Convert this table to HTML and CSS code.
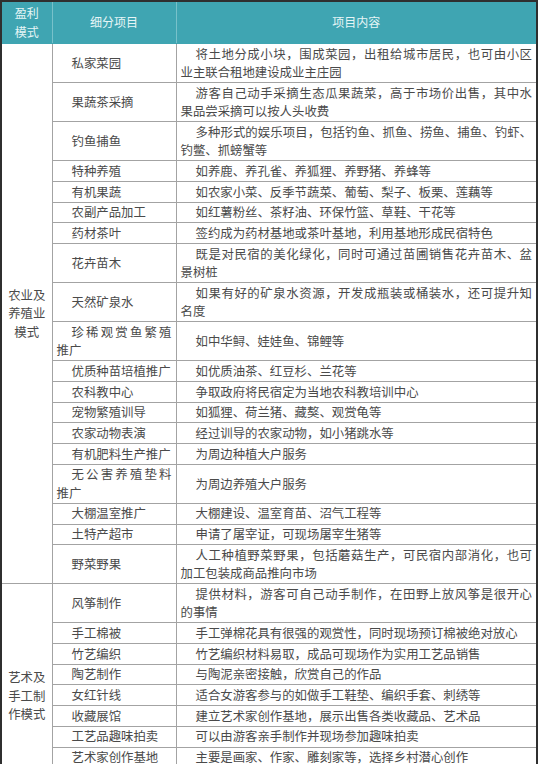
FILE: index.html
```html
<!DOCTYPE html>
<html lang="zh-CN">
<head>
<meta charset="utf-8">
<title>盈利模式</title>
<link rel="stylesheet" href="styles.css">
</head>
<body>
<table class="sheet">
  <colgroup><col class="w1"><col class="w2"><col class="w3"></colgroup>
  <thead>
    <tr class="head">
      <th class="c1">盈利<br>模式</th>
      <th class="c2">细分项目</th>
      <th class="c3">项目内容</th>
    </tr>
  </thead>
  <tbody>
    <tr>
      <td class="c1 mode" rowspan="19">农业及<br>养殖业<br>模式</td>
      <td class="c2 in">私家菜园</td>
      <td class="c3"><div class="l1">将土地分成小块，围成菜园，出租给城市居民，也可由小区</div><div>业主联合租地建设成业主庄园</div></td>
    </tr>
    <tr>
      <td class="c2 in">果蔬茶采摘</td>
      <td class="c3"><div class="l1">游客自己动手采摘生态瓜果蔬菜，高于市场价出售，其中水</div><div>果品尝采摘可以按人头收费</div></td>
    </tr>
    <tr>
      <td class="c2 in">钓鱼捕鱼</td>
      <td class="c3"><div class="l1">多种形式的娱乐项目，包括钓鱼、抓鱼、捞鱼、捕鱼、钓虾、</div><div>钓鳖、抓螃蟹等</div></td>
    </tr>
    <tr><td class="c2 in">特种养殖</td><td class="c3 in">如养鹿、养孔雀、养狐狸、养野猪、养蜂等</td></tr>
    <tr><td class="c2 in">有机果蔬</td><td class="c3 in">如农家小菜、反季节蔬菜、葡萄、梨子、板栗、莲藕等</td></tr>
    <tr><td class="c2 in">农副产品加工</td><td class="c3 in">如红薯粉丝、茶籽油、环保竹篮、草鞋、干花等</td></tr>
    <tr><td class="c2 in">药材茶叶</td><td class="c3 in">签约成为药材基地或茶叶基地，利用基地形成民宿特色</td></tr>
    <tr>
      <td class="c2 in">花卉苗木</td>
      <td class="c3"><div class="l1">既是对民宿的美化绿化，同时可通过苗圃销售花卉苗木、盆</div><div>景树桩</div></td>
    </tr>
    <tr>
      <td class="c2 in">天然矿泉水</td>
      <td class="c3"><div class="l1">如果有好的矿泉水资源，开发成瓶装或桶装水，还可提升知</div><div>名度</div></td>
    </tr>
    <tr>
      <td class="c2"><div class="l1">珍稀观赏鱼繁殖</div><div>推广</div></td>
      <td class="c3 in">如中华鲟、娃娃鱼、锦鲤等</td>
    </tr>
    <tr><td class="c2 in">优质种苗培植推广</td><td class="c3 in">如优质油茶、红豆杉、兰花等</td></tr>
    <tr><td class="c2 in">农科教中心</td><td class="c3 in">争取政府将民宿定为当地农科教培训中心</td></tr>
    <tr><td class="c2 in">宠物繁殖训导</td><td class="c3 in">如狐狸、荷兰猪、藏獒、观赏龟等</td></tr>
    <tr><td class="c2 in">农家动物表演</td><td class="c3 in">经过训导的农家动物，如小猪跳水等</td></tr>
    <tr><td class="c2 in">有机肥料生产推广</td><td class="c3 in">为周边种植大户服务</td></tr>
    <tr>
      <td class="c2"><div class="l1">无公害养殖垫料</div><div>推广</div></td>
      <td class="c3 in">为周边养殖大户服务</td>
    </tr>
    <tr><td class="c2 in">大棚温室推广</td><td class="c3 in">大棚建设、温室育苗、沼气工程等</td></tr>
    <tr><td class="c2 in">土特产超市</td><td class="c3 in">申请了屠宰证，可现场屠宰生猪等</td></tr>
    <tr>
      <td class="c2 in">野菜野果</td>
      <td class="c3"><div class="l1">人工种植野菜野果，包括蘑菇生产，可民宿内部消化，也可</div><div>加工包装成商品推向市场</div></td>
    </tr>
    <tr>
      <td class="c1 mode mode-art" rowspan="8">艺术及<br>手工制<br>作模式</td>
      <td class="c2 in">风筝制作</td>
      <td class="c3"><div class="l1">提供材料，游客可自己动手制作，在田野上放风筝是很开心</div><div>的事情</div></td>
    </tr>
    <tr><td class="c2 in">手工棉被</td><td class="c3 in">手工弹棉花具有很强的观赏性，同时现场预订棉被绝对放心</td></tr>
    <tr><td class="c2 in">竹艺编织</td><td class="c3 in">竹艺编织材料易取，成品可现场作为实用工艺品销售</td></tr>
    <tr><td class="c2 in">陶艺制作</td><td class="c3 in">与陶泥亲密接触，欣赏自己的作品</td></tr>
    <tr><td class="c2 in">女红针线</td><td class="c3 in">适合女游客参与的如做手工鞋垫、编织手套、刺绣等</td></tr>
    <tr><td class="c2 in">收藏展馆</td><td class="c3 in">建立艺术家创作基地，展示出售各类收藏品、艺术品</td></tr>
    <tr><td class="c2 in">工艺品趣味拍卖</td><td class="c3 in">可以由游客亲手制作并现场参加趣味拍卖</td></tr>
    <tr><td class="c2 in">艺术家创作基地</td><td class="c3 in">主要是画家、作家、雕刻家等，选择乡村潜心创作</td></tr>
  </tbody>
</table>
</body>
</html>
```

FILE: styles.css
```css
html, body {
  margin: 0;
}

body {
  background: #2f2f2f;
  padding: 2px 2px 0 2px;
  font-family: "Noto Sans CJK SC", "Noto Sans", sans-serif;
  font-size: 12.4px;
  line-height: 18.4px;
  color: #4a4a4a;
}

.sheet {
  width: 534px;
  border-collapse: collapse;
  table-layout: fixed;
  background: #ffffff;
}

.w1 { width: 50px; }
.w2 { width: 124px; }
.w3 { width: 360px; }

.head th {
  height: 41px;
  padding: 0 4px;
  background: #3fa5b2;
  color: #e6f5f6;
  font-weight: normal;
  font-size: 12px;
  text-align: center;
  vertical-align: middle;
  border-left: 1px solid #78c1ca;
  border-right: 1px solid #78c1ca;
  border-bottom: 1px solid #3fa5b2;
}

.head th.c1 { border-left: none; }
.head th.c3 { border-right: none; }

td {
  padding: 0.65px 4px;
  border: 1px solid #a3a3a3;
  vertical-align: middle;
  text-align: justify;
}

td.c1 { border-left: none; }
td.c3 { border-right: none; }

.mode {
  text-align: center;
}

.mode-art {
  vertical-align: top;
  padding-top: 84px;
}

.in {
  text-indent: 15px;
}

.l1 {
  text-indent: 15px;
  text-align: justify;
  text-align-last: justify;
}
```
